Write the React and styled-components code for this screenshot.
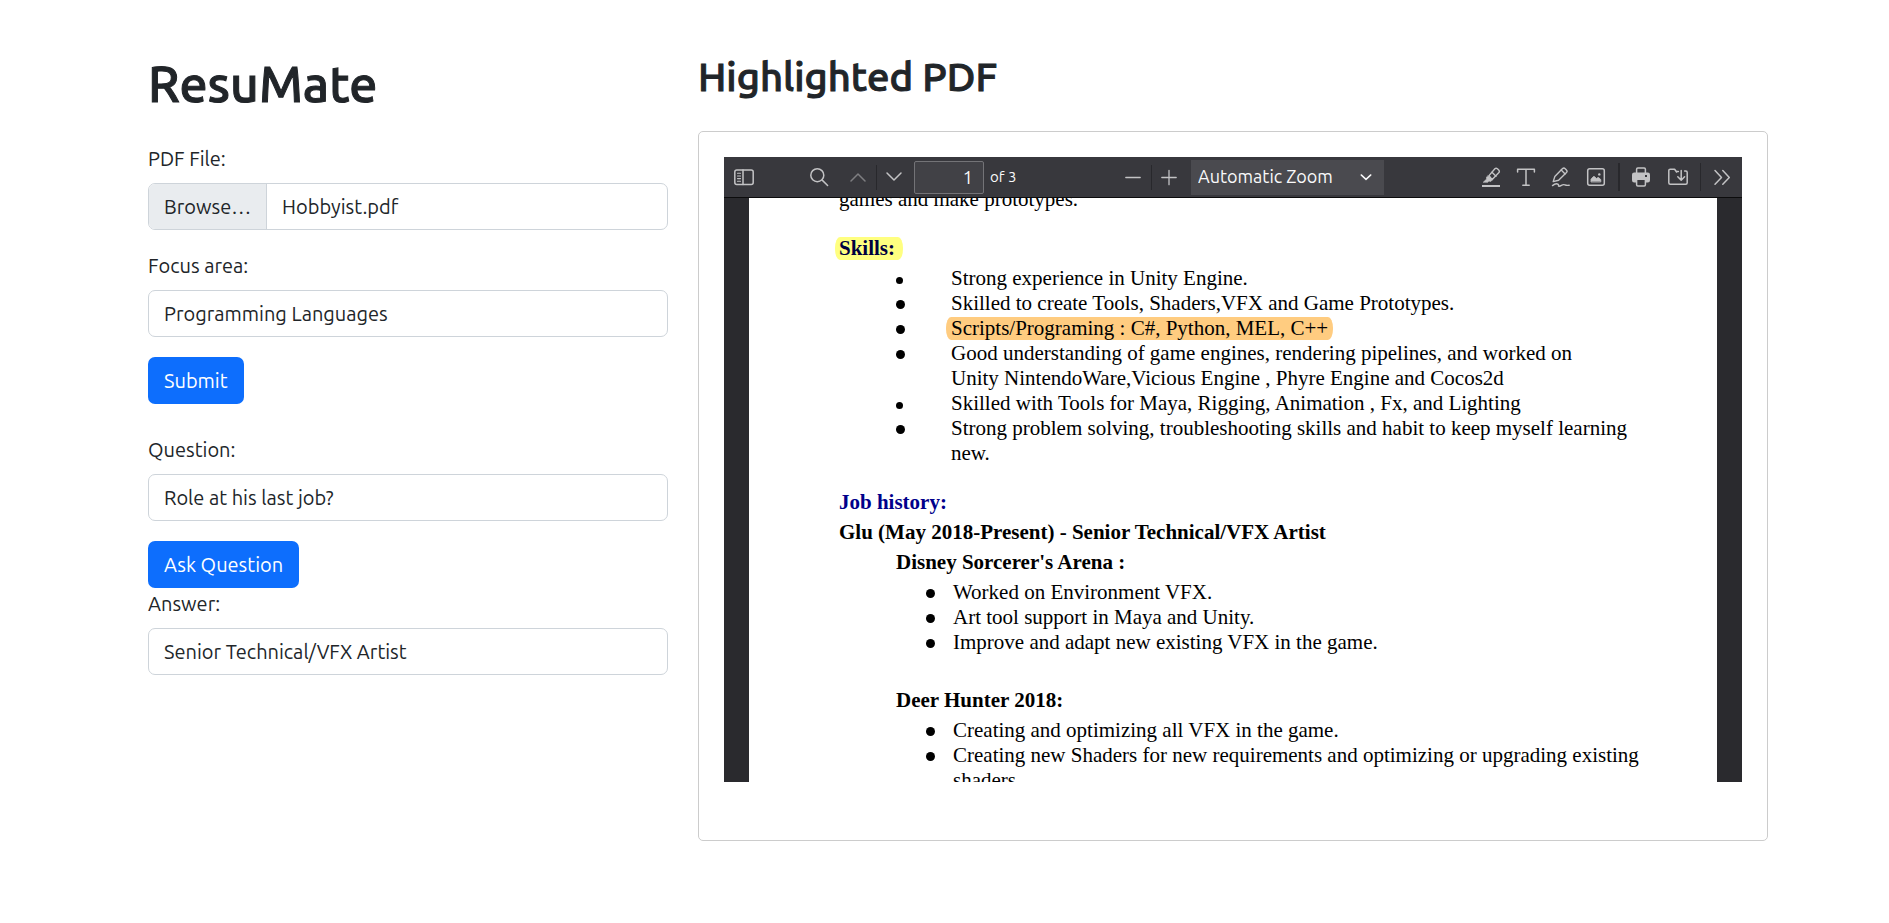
import React from "react";
import styled, { createGlobalStyle, css } from "styled-components";

const GlobalStyle = createGlobalStyle`
  *, *::before, *::after { box-sizing: border-box; }
  body {
    margin: 0;
    background: #fff;
    color: #212529;
    font-family: Ubuntu, "Noto Sans", "Open Sans", sans-serif;
    font-size: 20px;
    line-height: 30px;
  }
`;

const Page = styled.main`
  display: flex;
  align-items: flex-start;
  padding: 53px 106px 60px 133px;
`;

const Column = styled.section`
  flex: 0 0 ${(p) => (p.$wide ? "66.6667%" : "33.3333%")};
  min-width: 0;
  padding: 0 15px;
`;

const headingStyle = css`
  margin: 0 0 30px;
  font-weight: 500;
  -webkit-text-stroke: 1px currentColor;
`;

const Title = styled.h1`
  ${headingStyle}
  font-size: 50px;
  line-height: 60px;
`;

const Subtitle = styled.h2`
  ${headingStyle}
  font-size: 40px;
  line-height: 48px;
`;

const Form = styled.form`
  display: flex;
  flex-direction: column;
  align-items: flex-start;
  margin-bottom: ${(p) => (p.$spaced ? "30px" : "0")};
`;

const Field = styled.div`
  display: flex;
  flex-direction: column;
  gap: 8px;
  width: 100%;
  margin-bottom: 20px;
`;

const Label = styled.label`
  display: block;
  line-height: 32px;
`;

const boxStyle = css`
  width: 100%;
  height: 47px;
  border: 1px solid #ced4da;
  border-radius: 7px;
  background: #fff;
  color: #212529;
`;

const TextInput = styled.input`
  ${boxStyle}
  padding: 0 15px;
  font: inherit;
`;

const FileBox = styled.label`
  ${boxStyle}
  position: relative;
  display: flex;
  align-items: stretch;
  overflow: hidden;
  line-height: 45px;
  cursor: pointer;
`;

const HiddenFile = styled.input`
  position: absolute;
  inset: 0;
  opacity: 0;
`;

const BrowsePart = styled.span`
  padding: 0 15px;
  border-right: 1px solid #ced4da;
  background: #e9ecef;
`;

const FileName = styled.span`
  padding: 0 15px;
`;

const PrimaryButton = styled.button`
  height: 47px;
  padding: 0 16px;
  border: 0;
  border-radius: 7px;
  background: #0d6efd;
  color: #fff;
  font: inherit;
`;

const Card = styled.div`
  padding: 25px 25px 58px;
  border: 1px solid #ccc;
  border-radius: 5px;
`;

const Viewer = styled.div`
  display: flex;
  flex-direction: column;
  height: 625px;
  overflow: hidden;
  background: #2a2a2e;
`;

const Toolbar = styled.div`
  flex: none;
  display: flex;
  justify-content: space-between;
  align-items: center;
  height: 41px;
  border-bottom: 1px solid #0c0c0d;
  background: #38383d;
  color: #f9f9fa;
`;

const ToolGroup = styled.div`
  display: flex;
  align-items: center;
  min-width: ${(p) => p.$min || "0"};
  padding: ${(p) => p.$pad || "0"};
`;

const ToolButton = styled.button`
  display: grid;
  place-items: center;
  width: 35px;
  height: 35px;
  margin: ${(p) => p.$margin || "0"};
  padding: 0;
  border: 0;
  background: none;
  color: #c3c3c5;
  opacity: ${(p) => (p.disabled ? 0.5 : 1)};
`;

const Divider = styled.span`
  width: ${(p) => (p.$thick ? "2px" : "1px")};
  height: ${(p) => (p.$tall ? "28px" : "25px")};
  margin: ${(p) => p.$margin || "0"};
  background: #28282c;
`;

const PageInput = styled.input`
  width: 70px;
  height: 33px;
  margin: 0 6px 0 2px;
  padding: 0 10px;
  border: 1px solid #737377;
  border-radius: 2px;
  background: #414146;
  color: #f9f9fa;
  font: inherit;
  font-size: 18px;
  text-align: right;
`;

const PageCount = styled.span`
  font-size: 15px;
  white-space: nowrap;
`;

const SelectWrap = styled.div`
  display: grid;
  align-items: center;
  width: 193px;
  height: 35px;
  margin-left: 4px;
  background: #4a4a4f;

  > * { grid-area: 1 / 1; }
  > svg { justify-self: end; margin-right: 12px; pointer-events: none; }
`;

const ZoomSelect = styled.select`
  appearance: none;
  width: 100%;
  height: 35px;
  padding: 0 7px 2px;
  border: 0;
  background: transparent;
  color: #f9f9fa;
  font: inherit;
  font-size: 18px;
`;

const PageView = styled.div`
  flex: 1;
  min-height: 0;
  margin: 0 25px;
  overflow: hidden;
  background: #fff;
`;

const Sheet = styled.article`
  margin-top: -11px;
  padding: 0 90px;
  color: #000;
  font-family: "Liberation Serif", "Times New Roman", serif;
  font-size: 21px;
  line-height: 25px;
  white-space: nowrap;

  p, h3, h4 { margin: 0; font-size: inherit; }
`;

const Heading = styled.h3`
  padding-top: 24px;
  color: #00008b;
`;

const Line = styled.h4`
  padding-top: ${(p) => (p.$apart ? "33px" : "5px")};
  padding-left: ${(p) => (p.$indent ? "57px" : "0")};
`;

const Mark = styled.mark`
  display: inline-block;
  height: 23px;
  margin-left: ${(p) => (p.$warm ? "-5px" : "-4px")};
  padding: ${(p) => (p.$warm ? "0 5px" : "0 8px 0 4px")};
  border-radius: 5px / 11px;
  background: ${(p) => (p.$warm ? "#ffcc80" : "#ffff80")};
  color: ${(p) => (p.$warm ? "#000" : "#00003f")};
  line-height: 23px;
  vertical-align: top;
  margin-top: 1px;
`;

const Bullets = styled.ul`
  margin: 0 0 0 ${(p) => (p.$deep ? "87px" : "57px")};
  padding: 5px 0 0;
  list-style: none;
`;

const Bullet = styled.li`
  display: flex;

  &::before {
    content: "";
    flex: none;
    width: ${(p) => (p.$small ? "7px" : "9px")};
    height: ${(p) => (p.$small ? "7px" : "9px")};
    margin-top: ${(p) => (p.$small ? "11px" : "9px")};
    margin-right: ${(p) => (p.$deep ? "18px" : p.$small ? "48px" : "46px")};
    border-radius: 50%;
    background: #000;
  }
`;

const Icon = ({ size = 20, width = 1.5, children }) => (
  <svg
    width={size}
    height={size}
    viewBox="0 0 20 20"
    fill="none"
    stroke="currentColor"
    strokeWidth={width}
    strokeLinecap="round"
    strokeLinejoin="round"
    aria-hidden="true"
  >
    {children}
  </svg>
);

const SidebarIcon = () => (
  <Icon>
    <rect x="0.8" y="3" width="18.4" height="14.4" rx="2" />
    <path d="M9 3v14.4" />
    <path d="M3.5 6.3h3M3.5 9h3M3.5 11.6h3M3.5 14.2h3" strokeWidth="1.1" />
  </Icon>
);
const SearchIcon = () => (
  <Icon>
    <circle cx="8.3" cy="8.2" r="6.5" />
    <path d="M13.2 13.1 18.6 18.5" />
  </Icon>
);
const UpIcon = () => (
  <Icon><path d="M3 14 10 7l7 7" /></Icon>
);
const DownIcon = () => (
  <Icon><path d="M3 6l7 7 7-7" /></Icon>
);
const MinusIcon = () => (
  <Icon width={1.3}><path d="M2.8 10.5h14.4" /></Icon>
);
const PlusIcon = () => (
  <Icon width={1.3}><path d="M2.8 10.5h14.4M10 3.3v14.4" /></Icon>
);
const SmallChevron = () => (
  <Icon size={12} width={2.4}><path d="M2 6.5l8 7.5 8-7.5" /></Icon>
);
const HighlightIcon = () => (
  <Icon width={1.4}>
    <path d="M1 19h18" strokeWidth="2" strokeLinecap="butt" />
    <path d="M8 8.6 13.9 1.8q1.2-1.2 2.5 0l1.3 1.3q1.3 1.3 0 2.6L11.2 12.6Z" />
    <path d="M11 5.2l4 4" />
    <path d="M7.2 8.8l4.2 4-1.6 1.7-1.8-.4-1.2 1.2H2.2l3.4-3.3-.1-1.7Z" fill="currentColor" strokeWidth=".6" />
  </Icon>
);
const TextIcon = () => (
  <Icon>
    <path d="M1.6 5V2.2h16.8V5M10 2.2v16M6.8 18.3h6.4" />
  </Icon>
);
const DrawIcon = () => (
  <Icon width={1.4}>
    <path d="M2.2 14.6 3.8 9.6l7.8-8q1.3-1.1 2.6.1l1.2 1.2q1.3 1.3.1 2.6L7.6 13.2Z" />
    <path d="M10.2 3l3.9 3.9" />
    <path d="M1.5 18.6c2-1.7 4.5-2.2 5.7-1.2s-.6 1.7.9 1.8c2 0 2.600-1.600 4.400-1.600s1.300 1.200 5.700.7" />
  </Icon>
);
const ImageIcon = () => (
  <Icon>
    <rect x="1.7" y="1.8" width="16.6" height="16.4" rx="2" />
    <path d="M5 14.6v-2.4l2.4-2.6h1l2.2 2 1-1h1l2.2 2v2Z" fill="currentColor" strokeWidth=".8" />
    <circle cx="13.3" cy="7.4" r="1.2" fill="currentColor" stroke="none" />
  </Icon>
);
const PrintIcon = () => (
  <Icon>
    <path d="M5.6 6V2.2q0-1.2 1.2-1.2h6.4q1.2 0 1.2 1.2V6" />
    <path d="M3.2 5.6h13.6q2.2 0 2.2 2.2v5.4q0 2.2-2.2 2.2H3.2Q1 15.4 1 13.2V7.8q0-2.2 2.2-2.2Z" fill="currentColor" stroke="none" />
    <path d="M5.6 12.2h8.8v5.6q0 1.2-1.2 1.2H6.8q-1.2 0-1.2-1.2Z" fill="#38383d" />
    <rect x="14" y="8" width="2" height="2" fill="#38383d" stroke="none" />
  </Icon>
);
const SaveIcon = () => (
  <Icon>
    <path d="M8.6 5 6.6 2.2H2.2Q.8 2.2.8 3.6v12.2q0 1.5 1.5 1.5h15.4q1.5 0 1.5-1.5V5.6q0-1.6-1.5-1.6H16.6" />
    <path d="M8.6 4.4h1.8M13.2 3.4V13M9.8 9.8l3.4 3.5 3.4-3.5" />
  </Icon>
);
const MoreIcon = () => (
  <Icon><path d="M3 3.5l6.5 7L3 17.2M10.8 3.5l6.5 7-6.5 6.7" /></Icon>
);

const skills = [
  { text: "Strong experience in Unity Engine.", small: true },
  { text: "Skilled to create Tools, Shaders,VFX and Game Prototypes." },
  { text: "Scripts/Programing : C#, Python, MEL, C++", marked: true },
  {
    text: "Good understanding of game engines, rendering pipelines, and worked on",
    more: "Unity NintendoWare,Vicious Engine , Phyre Engine and Cocos2d",
  },
  { text: "Skilled with Tools for Maya, Rigging, Animation , Fx, and Lighting", small: true },
  {
    text: "Strong problem solving, troubleshooting skills and habit to keep myself learning",
    more: "new.",
  },
];

const disney = [
  { text: "Worked on Environment VFX." },
  { text: "Art tool support in Maya and Unity." },
  { text: "Improve and adapt new existing VFX in the game." },
];

const deerHunter = [
  { text: "Creating and optimizing all VFX in the game." },
  {
    text: "Creating new Shaders for new requirements and optimizing or upgrading existing",
    more: "shaders.",
  },
];

const BulletList = ({ items, deep }) => (
  <Bullets $deep={deep}>
    {items.map((item) => (
      <Bullet key={item.text} $small={item.small} $deep={deep}>
        <div>
          {item.marked ? <Mark $warm>{item.text}</Mark> : item.text}
          {item.more && (
            <>
              <br />
              {item.more}
            </>
          )}
        </div>
      </Bullet>
    ))}
  </Bullets>
);

const PdfToolbar = () => (
  <Toolbar role="toolbar" aria-label="PDF controls">
    <ToolGroup $min="302px" $pad="0 0 0 3px">
      <ToolButton aria-label="Toggle sidebar"><SidebarIcon /></ToolButton>
      <ToolButton aria-label="Find" $margin="0 4px 0 40px"><SearchIcon /></ToolButton>
      <ToolButton aria-label="Previous page" disabled><UpIcon /></ToolButton>
      <Divider />
      <ToolButton aria-label="Next page"><DownIcon /></ToolButton>
      <PageInput aria-label="Page" defaultValue="1" />
      <PageCount>of 3</PageCount>
    </ToolGroup>
    <ToolGroup>
      <ToolButton aria-label="Zoom out"><MinusIcon /></ToolButton>
      <Divider />
      <ToolButton aria-label="Zoom in"><PlusIcon /></ToolButton>
      <SelectWrap>
        <ZoomSelect aria-label="Zoom" defaultValue="auto">
          <option value="auto">Automatic Zoom</option>
          <option value="page">Page Fit</option>
        </ZoomSelect>
        <SmallChevron />
      </SelectWrap>
    </ToolGroup>
    <ToolGroup $pad="0 2px 0 0">
      <ToolButton aria-label="Highlight"><HighlightIcon /></ToolButton>
      <ToolButton aria-label="Text"><TextIcon /></ToolButton>
      <ToolButton aria-label="Draw"><DrawIcon /></ToolButton>
      <ToolButton aria-label="Add image"><ImageIcon /></ToolButton>
      <Divider $thick $tall $margin="0 4px" />
      <ToolButton aria-label="Print" $margin="0 2px 0 0"><PrintIcon /></ToolButton>
      <ToolButton aria-label="Save"><SaveIcon /></ToolButton>
      <Divider $tall $margin="0 4px" />
      <ToolButton aria-label="More tools"><MoreIcon /></ToolButton>
    </ToolGroup>
  </Toolbar>
);

export default function App() {
  const stay = (event) => event.preventDefault();

  return (
    <>
      <GlobalStyle />
      <Page>
        <Column>
          <Title>ResuMate</Title>
          <Form $spaced onSubmit={stay}>
            <Field>
              <Label htmlFor="pdf">PDF File:</Label>
              <FileBox htmlFor="pdf">
                <HiddenFile id="pdf" type="file" accept="application/pdf" />
                <BrowsePart>Browse…</BrowsePart>
                <FileName>Hobbyist.pdf</FileName>
              </FileBox>
            </Field>
            <Field>
              <Label htmlFor="focus">Focus area:</Label>
              <TextInput id="focus" type="text" defaultValue="Programming Languages" />
            </Field>
            <PrimaryButton type="submit">Submit</PrimaryButton>
          </Form>
          <Form onSubmit={stay}>
            <Field>
              <Label htmlFor="question">Question:</Label>
              <TextInput id="question" type="text" defaultValue="Role at his last job?" />
            </Field>
            <PrimaryButton type="submit">Ask Question</PrimaryButton>
            <Field>
              <Label htmlFor="answer">Answer:</Label>
              <TextInput id="answer" type="text" readOnly value="Senior Technical/VFX Artist" />
            </Field>
          </Form>
        </Column>
        <Column $wide>
          <Subtitle>Highlighted PDF</Subtitle>
          <Card>
            <Viewer>
              <PdfToolbar />
              <PageView>
                <Sheet>
                  <p>games and make prototypes.</p>
                  <Heading><Mark>Skills:</Mark></Heading>
                  <BulletList items={skills} />
                  <Heading>Job history:</Heading>
                  <Line>Glu (May 2018-Present) - Senior Technical/VFX Artist</Line>
                  <Line $indent>Disney Sorcerer's Arena :</Line>
                  <BulletList items={disney} deep />
                  <Line $indent $apart>Deer Hunter 2018:</Line>
                  <BulletList items={deerHunter} deep />
                </Sheet>
              </PageView>
            </Viewer>
          </Card>
        </Column>
      </Page>
    </>
  );
}
